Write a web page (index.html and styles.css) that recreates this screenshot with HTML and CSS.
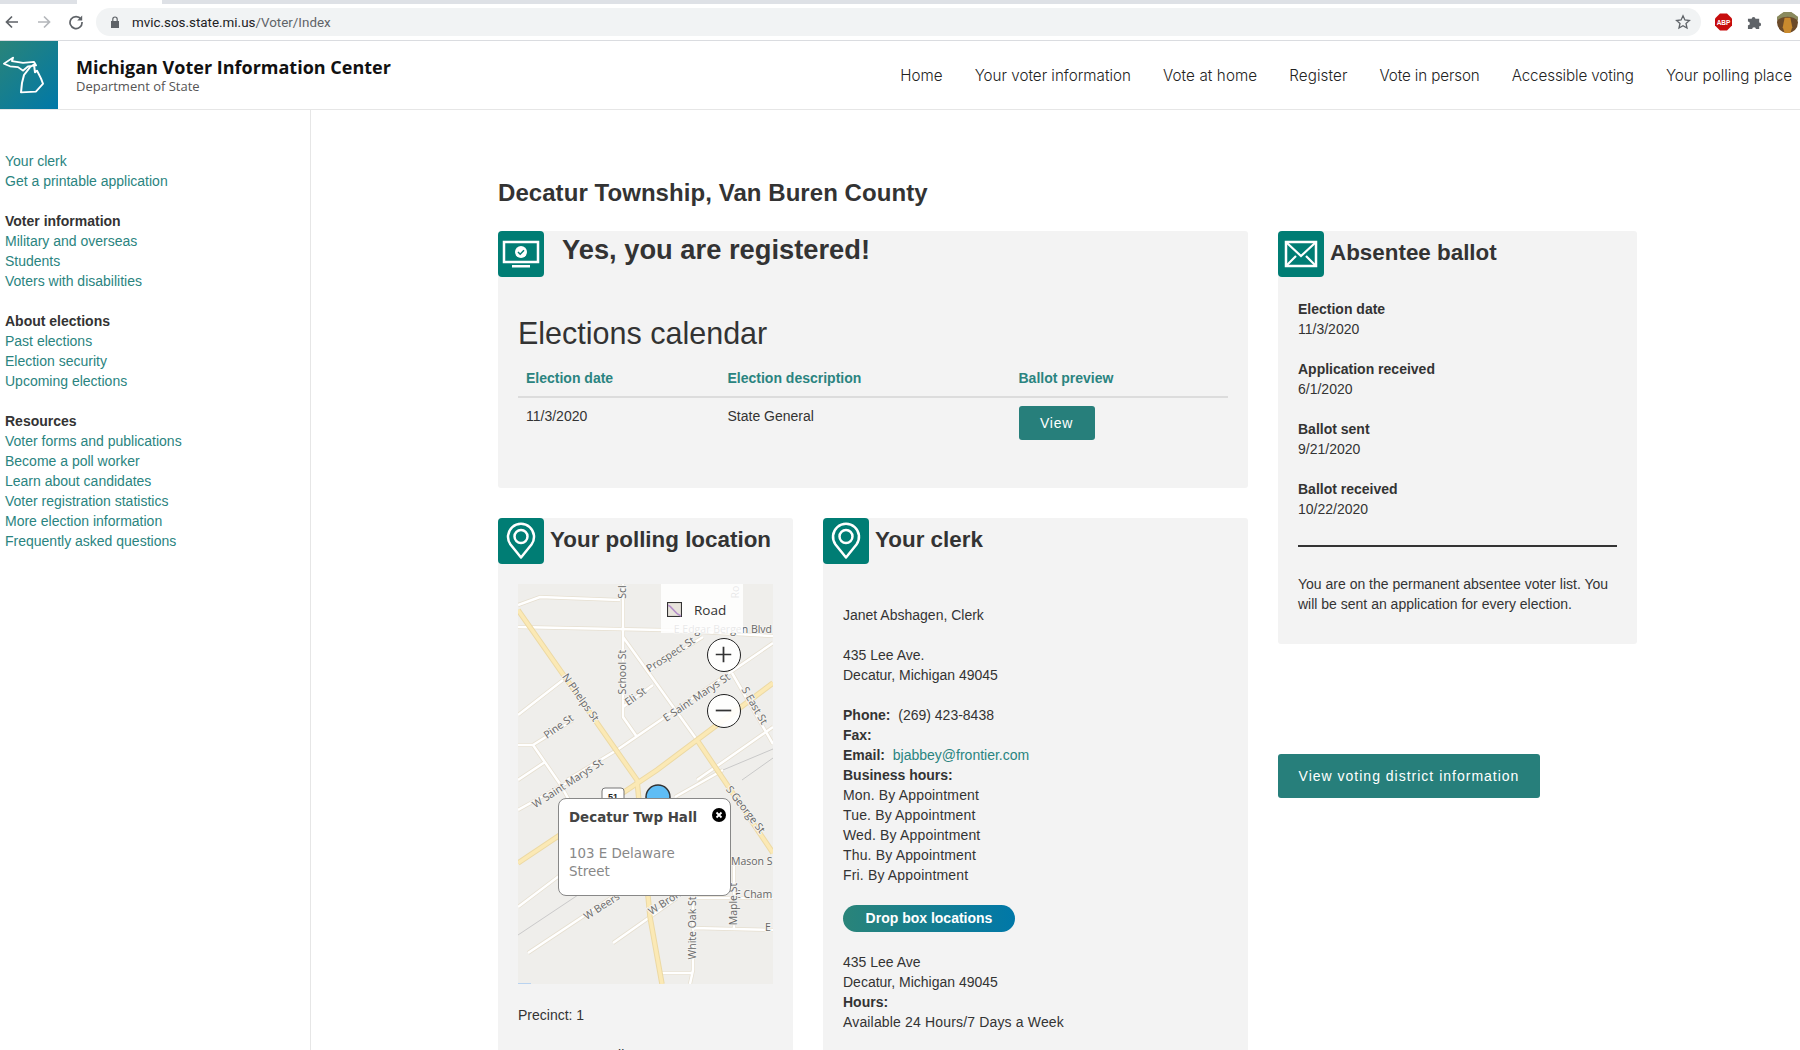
FILE: index.html
```html
<!DOCTYPE html>
<html lang="en">
<head>
    <meta charset="UTF-8">
    <title>Voter Information</title>
    <link rel="stylesheet" href="styles.css">
</head>
<body>
    <div class="tabstrip"><div class="tab"></div></div>
    <div class="toolbar">
        <svg class="nav-icon" viewBox="0 0 16 16"><path d="M14 8H3M8 2.5 2.5 8 8 13.5" fill="none" stroke="#5f6368" stroke-width="1.7"/></svg>
        <svg class="nav-icon" viewBox="0 0 16 16"><path d="M2 8h11M8 2.5 13.5 8 8 13.5" fill="none" stroke="#b4b7bb" stroke-width="1.7"/></svg>
        <svg class="nav-icon" viewBox="0 0 16 16"><path d="M13 5.2A6 6 0 1 0 14 8" fill="none" stroke="#5f6368" stroke-width="1.7"/><path d="M14.2 1.5v5h-5z" fill="#5f6368"/></svg>
        <div class="omnibox">
            <svg class="lock" viewBox="0 0 10 12"><path d="M1 5h8v7H1z" fill="#5f6368"/><path d="M2.8 5V3.2a2.2 2.2 0 0 1 4.4 0V5" fill="none" stroke="#5f6368" stroke-width="1.2"/></svg>
            <span class="url">mvic.sos.state.mi.us<span class="url-path">/Voter/Index</span></span>
            <svg class="star" viewBox="0 0 16 16"><path d="M8 1.8l1.9 4.2 4.5.5-3.4 3 1 4.500L8 11.700 4 14l1-4.500-3.400-3 4.500-.5z" fill="none" stroke="#5f6368" stroke-width="1.3"/></svg>
        </div>
        <svg class="abp" viewBox="0 0 17 17"><path d="M5 0h7l5 5v7l-5 5H5l-5-5V5z" fill="#c70d0d"/><text x="8.500" y="11" class="abp-text">ABP</text></svg>
        <svg class="puzzle" viewBox="0 0 16 16"><path d="M1 4h4a2 2 0 0 1 4 0h4v4a2 2 0 0 1 0 4v3H9.500a2 2 0 0 0-4 0H1v-4a2 2 0 0 0 0-4z" fill="#5f6368"/></svg>
        <svg class="avatar" viewBox="0 0 22 22"><circle cx="11" cy="11" r="11" fill="#6b4a2a"/><path d="M0 9C5 4 16 3 22 9V5L15 0H7L0 5z" fill="#8a8a5e"/><path d="M8 6h6l2 10-2 6H8l-2-6z" fill="#c98a2e"/></svg>
    </div>

    <header class="header">
        <div class="logo">
            <svg viewBox="0 0 58 78" preserveAspectRatio="none"><path d="M4 26l9-7-1 4 11 2 11-1 2 4-8 1-5 5-5-4-8-1zM21 59l1-11 2-9 6-9 4-3 1 9 2-2 4 9 2 6-7 9z" fill="none" stroke="#fff" stroke-width="2" stroke-linejoin="round"/></svg>
        </div>
        <div class="brand">
            <div class="brand-title">Michigan Voter Information Center</div>
            <div class="brand-sub">Department of State</div>
        </div>
        <nav class="topnav">
            <a>Home</a>
            <a>Your voter information</a>
            <a class="nav-loose">Vote at home</a>
            <a class="nav-loose">Register</a>
            <a class="nav-tight">Vote in person</a>
            <a class="nav-tight">Accessible voting</a>
            <a>Your polling place</a>
        </nav>
    </header>

    <div class="page">
        <aside class="sidebar">
            <ul class="side-group">
                <li><a>Your clerk</a></li>
                <li><a>Get a printable application</a></li>
            </ul>
            <ul class="side-group">
                <li class="side-title">Voter information</li>
                <li><a>Military and overseas</a></li>
                <li><a>Students</a></li>
                <li><a>Voters with disabilities</a></li>
            </ul>
            <ul class="side-group">
                <li class="side-title">About elections</li>
                <li><a>Past elections</a></li>
                <li><a>Election security</a></li>
                <li><a>Upcoming elections</a></li>
            </ul>
            <ul class="side-group">
                <li class="side-title">Resources</li>
                <li><a>Voter forms and publications</a></li>
                <li><a>Become a poll worker</a></li>
                <li><a>Learn about candidates</a></li>
                <li><a>Voter registration statistics</a></li>
                <li><a>More election information</a></li>
                <li><a>Frequently asked questions</a></li>
            </ul>
        </aside>

        <main class="content">
            <h1 class="page-title">Decatur Township, Van Buren County</h1>
            <div class="columns">
                <div class="col-left">
                    <section class="panel registered">
                        <div class="panel-head">
                            <div class="icon-box">
                                <svg viewBox="0 0 46 46"><path d="M6 11h34v20H6z" fill="none" stroke="#fff" stroke-width="2.500"/><path d="M14 34h18v2.500H14z" fill="#fff"/><circle cx="23" cy="21" r="6" fill="#fff"/><path d="M20 21l2.200 2.200 3.800-4" fill="none" stroke="#007d74" stroke-width="1.500"/></svg>
                            </div>
                            <h2 class="reg-title">Yes, you are registered!</h2>
                        </div>
                        <div class="calendar">
                            <h3 class="cal-title">Elections calendar</h3>
                            <div class="cal-row cal-header">
                                <span>Election date</span>
                                <span>Election description</span>
                                <span>Ballot preview</span>
                            </div>
                            <div class="cal-row cal-body">
                                <span>11/3/2020</span>
                                <span>State General</span>
                                <a class="btn-view">View</a>
                            </div>
                        </div>
                    </section>

                    <div class="lower">
                        <section class="panel polling">
                            <div class="panel-head">
                                <div class="icon-box">
                                    <svg viewBox="0 0 46 46"><path d="M23 39.500 12.500 26.500a13 13 0 1 1 21 0z" fill="none" stroke="#fff" stroke-width="2.500" stroke-linejoin="round"/><circle cx="23" cy="18.500" r="6.500" fill="none" stroke="#fff" stroke-width="2.500"/></svg>
                                </div>
                                <h2 class="panel-title">Your polling location</h2>
                            </div>
                            <div class="map">
                                <svg class="map-svg" viewBox="0 0 255 400">
                                    <rect width="255" height="400" fill="#efeeeb"/>
                                    <g class="rail">
                                        <path d="M224 196 255 174M0 351 72 303M205 186 255 165"/>
                                    </g>
                                    <g class="road-case">
                                        <path d="M0 21 22 13 102 16M105 0V133L119 153M0 43 145 46 255 52M132 86 185 53M105 123 135 101M49 196 99 166 255 59M0 226 72 186M0 131 45 96M15 161 55 136M0 161H15L42 200 60 232M0 196 27 178M214 89 255 160M179 196 255 143M10 369 105 306M95 359 159 314M0 323 45 289M142 389H175M175 316V386L172 400M216 274V346M175 314H255M175 344 255 346M105 53 179 156M157 213 205 186"/>
                                    </g>
                                    <g class="road">
                                        <path d="M0 21 22 13 102 16M105 0V133L119 153M0 43 145 46 255 52M132 86 185 53M105 123 135 101M49 196 99 166 255 59M0 226 72 186M0 131 45 96M15 161 55 136M0 161H15L42 200 60 232M0 196 27 178M214 89 255 160M179 196 255 143M10 369 105 306M95 359 159 314M0 323 45 289M142 389H175M175 316V386L172 400M216 274V346M175 314H255M175 344 255 346M105 53 179 156M157 213 205 186"/>
                                    </g>
                                    <g class="major-case">
                                        <path d="M0 26 119 196 132 333 144 400M0 279 139 186 255 99M179 156 255 269"/>
                                    </g>
                                    <g class="major">
                                        <path d="M0 26 119 196 132 333 144 400M0 279 139 186 255 99M179 156 255 269"/>
                                    </g>
                                    <g class="labels">
                                        <text transform="translate(105 8) rotate(-90)">Scl</text>
                                        <text transform="translate(218 8) rotate(-90)">Ro</text>
                                        <text class="label-end" x="254" y="46">E Edgar Bergen Blvd</text>
                                        <text transform="translate(105 88) rotate(-90)">School St</text>
                                        <text transform="translate(153 71) rotate(-33)">Prospect St</text>
                                        <text transform="translate(118 113) rotate(-35)">Eli St</text>
                                        <text transform="translate(62 114) rotate(55)">N Phelps St</text>
                                        <text transform="translate(179 114) rotate(-34)">E Saint Marys St</text>
                                        <text transform="translate(236 122) rotate(60)">S East St</text>
                                        <text transform="translate(41 143) rotate(-35)">Pine St</text>
                                        <text transform="translate(50 200) rotate(-33)">W Saint Marys St</text>
                                        <text transform="translate(227 226) rotate(52)">S George St</text>
                                        <text class="label-start" x="213" y="278">Mason S</text>
                                        <text class="label-start" x="217" y="311">E Cham</text>
                                        <text transform="translate(216 320) rotate(-90)">Maple St</text>
                                        <text transform="translate(175 344) rotate(-90)">White Oak St</text>
                                        <text transform="translate(84 323) rotate(-33)">W Beers</text>
                                        <text transform="translate(147 319) rotate(-33)">W Bron</text>
                                        <text class="label-start" x="247" y="344">E</text>
                                    </g>
                                    <rect x="84" y="204" width="22" height="20" rx="3" fill="#fff" stroke="#777"/>
                                    <text x="95" y="214" class="shield">51</text>
                                    <circle cx="140" cy="213" r="12" fill="#5fbdf5" stroke="#333" stroke-width="1.500"/>
                                    <rect x="0" y="399" width="13" height="1" fill="#b9d3f0"/>
                                </svg>
                                <div class="map-type">
                                    <svg class="map-type-icon" viewBox="0 0 14 14"><rect x=".5" y=".5" width="13" height="13" fill="#e8e4dc" stroke="#333"/><path d="M1 3c4 1 5 7 12 10" fill="none" stroke="#b48fc9" stroke-width="1.500"/></svg>
                                    <span>Road</span>
                                </div>
                                <div class="zoom-btn zoom-in"><svg viewBox="0 0 32 32"><path d="M16 8v16M8 16h16" stroke="#333" stroke-width="1.800"/></svg></div>
                                <div class="zoom-btn zoom-out"><svg viewBox="0 0 32 32"><path d="M8 16h16" stroke="#333" stroke-width="1.800"/></svg></div>
                                <div class="popup">
                                    <div class="popup-title">Decatur Twp Hall</div>
                                    <div class="popup-addr">103 E Delaware<br>Street</div>
                                    <svg class="popup-close" viewBox="0 0 14 14"><circle cx="7" cy="7" r="7" fill="#000"/><path d="M4.500 4.500l5 5M9.500 4.500l-5 5" stroke="#fff" stroke-width="1.800"/></svg>
                                </div>
                            </div>
                            <p class="precinct">Precinct: 1</p>
                            <p class="place">Decatur Twp Hall</p>
                        </section>

                        <section class="panel clerk">
                            <div class="panel-head">
                                <div class="icon-box">
                                    <svg viewBox="0 0 46 46"><path d="M23 39.500 12.500 26.500a13 13 0 1 1 21 0z" fill="none" stroke="#fff" stroke-width="2.500" stroke-linejoin="round"/><circle cx="23" cy="18.500" r="6.500" fill="none" stroke="#fff" stroke-width="2.500"/></svg>
                                </div>
                                <h2 class="panel-title">Your clerk</h2>
                            </div>
                            <div class="clerk-body">
                                <p>Janet Abshagen, Clerk</p>
                                <p>435 Lee Ave.<br>Decatur, Michigan 49045</p>
                                <p>
                                    <b>Phone:</b>&nbsp; (269) 423-8438<br>
                                    <b>Fax:</b><br>
                                    <b>Email:</b>&nbsp; <a>bjabbey@frontier.com</a><br>
                                    <b>Business hours:</b><br>
                                    <span class="wide">Mon. By Appointment</span><br>
                                    <span class="wide">Tue. By Appointment</span><br>
                                    <span class="wide">Wed. By Appointment</span><br>
                                    <span class="wide">Thu. By Appointment</span><br>
                                    <span class="wide">Fri. By Appointment</span>
                                </p>
                                <a class="btn-dropbox">Drop box locations</a>
                                <p>435 Lee Ave<br>Decatur, Michigan 49045<br><b>Hours:</b><br><span class="wide">Available 24 Hours/7 Days a Week</span></p>
                            </div>
                        </section>
                    </div>
                </div>

                <div class="col-right">
                    <section class="panel absentee">
                        <div class="panel-head">
                            <div class="icon-box">
                                <svg viewBox="0 0 46 46"><path d="M8 11h30v24H8z" fill="none" stroke="#fff" stroke-width="2.500"/><path d="M9 12l14 13 14-13M9 34l9-9M37 34l-9-9" fill="none" stroke="#fff" stroke-width="2.200"/></svg>
                            </div>
                            <h2 class="panel-title">Absentee ballot</h2>
                        </div>
                        <div class="absentee-body">
                            <p><b>Election date</b><br>11/3/2020</p>
                            <p><b>Application received</b><br>6/1/2020</p>
                            <p><b>Ballot sent</b><br>9/21/2020</p>
                            <p class="last-date"><b>Ballot received</b><br>10/22/2020</p>
                            <hr class="rule">
                            <p>You are on the permanent absentee voter list. You will be sent an application for every election.</p>
                        </div>
                    </section>
                    <a class="btn-district">View voting district information</a>
                </div>
            </div>
        </main>
    </div>
</body>
</html>
```
FILE: styles.css
```css
*{
    margin: 0;
    padding: 0;
    box-sizing: border-box;
}
html,body{
    height: 1050px;
    overflow: hidden;
}
body{
    font: 14px/20px "Liberation Sans", Arial, sans-serif;
    color: #333;
    background: #fff;
}
ul{
    list-style: none;
}
a{
    color: #2a8480;
}

/* browser bar */
.tabstrip{
    height: 4px;
    background: #dee1e6;
    padding-left: 77px;
}
.tab{
    width: 85px;
    height: 4px;
    background: #fff;
}
.toolbar{
    height: 37px;
    display: flex;
    align-items: center;
    padding: 0 0 0 4px;
    border-bottom: 1px solid #dadce0;
}
.nav-icon{
    width: 16px;
    height: 16px;
    margin-right: 16px;
}
.omnibox{
    width: 1605px;
    height: 28px;
    margin-left: -4px;
    background: #f1f3f4;
    border-radius: 14px;
    display: flex;
    align-items: center;
    padding: 0 10px 0 14px;
}
.lock{
    width: 10px;
    height: 12px;
    margin-right: 12px;
}
.url{
    font: 13.400px "Roboto", sans-serif;
    color: #202124;
    flex: 1;
}
.url-path{
    color: #5f6368;
}
.star{
    width: 16px;
    height: 16px;
}
.abp{
    width: 17px;
    height: 18px;
    margin-left: 14px;
}
.abp-text{
    font: 700 6.500px "Liberation Sans", sans-serif;
    fill: #fff;
    text-anchor: middle;
}
.puzzle{
    width: 15px;
    height: 15px;
    margin-left: 15px;
}
.avatar{
    width: 21px;
    height: 21px;
    margin-left: 15px;
}

/* site header */
.header{
    height: 69px;
    display: flex;
    align-items: center;
    border-bottom: 1px solid #e6e6e6;
}
.logo{
    width: 58px;
    height: 68px;
    background: linear-gradient(135deg, #2a8479, #0078a8);
}
.logo svg{
    display: block;
    width: 58px;
    height: 68px;
}
.brand{
    margin-left: 18px;
}
.brand-title{
    font: 700 18px/22px "Open Sans", sans-serif;
    color: #111;
}
.brand-sub{
    font: 13px/17px "Open Sans", sans-serif;
    color: #555;
}
.topnav{
    margin-left: auto;
    padding-right: 8px;
    display: flex;
    gap: 32px;
}
.topnav a{
    font: 300 15.200px "Inter", sans-serif;
    color: #222;
}
.topnav .nav-loose{
    letter-spacing: .1px;
}
.topnav .nav-tight{
    letter-spacing: -.12px;
}

/* left menu */
.page{
    display: flex;
}
.sidebar{
    width: 311px;
    height: 940px;
    padding: 41px 0 0 5px;
    border-right: 1px solid #e6e6e6;
}
.side-group{
    margin-bottom: 20px;
}
.side-title{
    font-weight: 700;
    color: #333;
}

/* main */
.content{
    padding-left: 187px;
}
.page-title{
    font-size: 24px;
    line-height: 30px;
    letter-spacing: .06px;
    margin-top: 68px;
    margin-bottom: 23px;
}
.columns{
    display: flex;
    gap: 30px;
    align-items: flex-start;
}
.col-left{
    width: 750px;
}
.col-right{
    width: 359px;
}
.panel{
    background: #f3f3f3;
    border-radius: 3px;
}
.panel-head{
    display: flex;
}
.icon-box{
    width: 46px;
    height: 46px;
    background: #007d74;
    border-radius: 4px;
    flex: none;
}
.icon-box svg{
    display: block;
    width: 46px;
    height: 46px;
}
.panel-title{
    font-size: 22.400px;
    line-height: 44px;
    margin-left: 6px;
}
.registered{
    height: 257px;
}
.reg-title{
    font-size: 27.300px;
    line-height: 38px;
    margin-left: 18px;
}
.calendar{
    padding: 36px 20px 0;
}
.cal-title{
    font-size: 30.500px;
    line-height: 40px;
    font-weight: 400;
    margin-bottom: 15px;
}
.cal-row{
    display: grid;
    grid-template-columns: 201.500px 291px 1fr;
    padding-left: 8px;
}
.cal-header{
    font-weight: 700;
    color: #2a8480;
    height: 30px;
    border-bottom: 2px solid #dcdcdc;
}
.cal-body{
    padding-top: 8px;
}
.btn-view{
    display: block;
    width: 76px;
    height: 34px;
    line-height: 34px;
    text-align: center;
    letter-spacing: .7px;
    color: #fff;
    background: #277f7b;
    border-radius: 3px;
}
.lower{
    display: flex;
    gap: 30px;
    margin-top: 30px;
}
.polling{
    width: 295px;
    height: 560px;
}
.clerk{
    width: 425px;
    height: 560px;
}

/* map */
.map{
    position: relative;
    width: 255px;
    height: 400px;
    margin: 20px 0 0 20px;
    overflow: hidden;
}
.map-svg{
    display: block;
    width: 255px;
    height: 400px;
}
.rail path{
    fill: none;
    stroke: #c9c9c9;
    stroke-width: 1;
}
.road-case path{
    fill: none;
    stroke: #e6dfd0;
    stroke-width: 4;
}
.road path{
    fill: none;
    stroke: #fff;
    stroke-width: 2.500;
}
.major-case path{
    fill: none;
    stroke: #ecd9a4;
    stroke-width: 5.500;
}
.major path{
    fill: none;
    stroke: #fbe9b5;
    stroke-width: 3.500;
}
.labels text{
    font: 10.500px "Open Sans", sans-serif;
    fill: #666;
    stroke: #f4f3f0;
    stroke-width: 2px;
    paint-order: stroke;
    text-anchor: middle;
    dominant-baseline: middle;
}
.labels .label-end{
    text-anchor: end;
}
.labels .label-start{
    text-anchor: start;
}
.shield{
    font: 700 9px "Liberation Sans", sans-serif;
    fill: #222;
    text-anchor: middle;
    dominant-baseline: middle;
}
.map-type{
    position: absolute;
    left: 143px;
    top: 0;
    width: 82px;
    height: 49px;
    background: rgba(255, 255, 255, .85);
    display: flex;
    align-items: center;
    padding: 2px 0 0 6px;
    font: 13.500px "Open Sans", sans-serif;
    color: #333;
}
.map-type-icon{
    width: 15px;
    height: 15px;
    margin-right: 12px;
}
.zoom-btn{
    position: absolute;
    left: 189px;
    width: 34px;
    height: 34px;
    background: rgba(255, 255, 255, .9);
    border: 1.500px solid #222;
    border-radius: 50%;
}
.zoom-btn svg{
    display: block;
    width: 31px;
    height: 31px;
}
.zoom-in{
    top: 54px;
}
.zoom-out{
    top: 110px;
}
.popup{
    position: absolute;
    left: 40px;
    top: 214px;
    width: 173px;
    height: 98px;
    padding: 10px 10px;
    background: #fff;
    border: 1px solid #888;
    border-radius: 8px;
    font: 13.400px/18.500px "DejaVu Sans", sans-serif;
}
.popup-title{
    font-weight: 700;
    color: #444;
    margin-bottom: 17px;
}
.popup-addr{
    color: #888;
}
.popup-close{
    position: absolute;
    right: 4px;
    top: 9px;
    width: 14px;
    height: 14px;
}
.precinct{
    margin: 21px 0 0 20px;
}
.place{
    margin: 20px 0 0 20px;
}

/* clerk */
.clerk-body{
    padding: 41px 20px 0;
}
.clerk-body p{
    margin-bottom: 20px;
}
.wide{
    letter-spacing: .16px;
}
.btn-dropbox{
    display: block;
    width: 172px;
    height: 27px;
    line-height: 27px;
    margin: 0 0 20px;
    text-align: center;
    font-weight: 700;
    color: #fff;
    border-radius: 14px;
    background: linear-gradient(90deg, #2a8479, #0078a8);
}

/* absentee */
.absentee{
    height: 413px;
}
.absentee-body{
    padding: 22px 20px 0;
}
.absentee-body p{
    margin-bottom: 20px;
}
.absentee-body .last-date{
    margin-bottom: 26px;
}
.rule{
    border: 0;
    border-top: 2px solid #333;
    margin: 0 0 27px;
}
.btn-district{
    display: block;
    width: 262px;
    height: 44px;
    line-height: 44px;
    margin-top: 110px;
    text-align: center;
    letter-spacing: 1px;
    color: #fff;
    background: #277f7b;
    border-radius: 3px;
}
```
